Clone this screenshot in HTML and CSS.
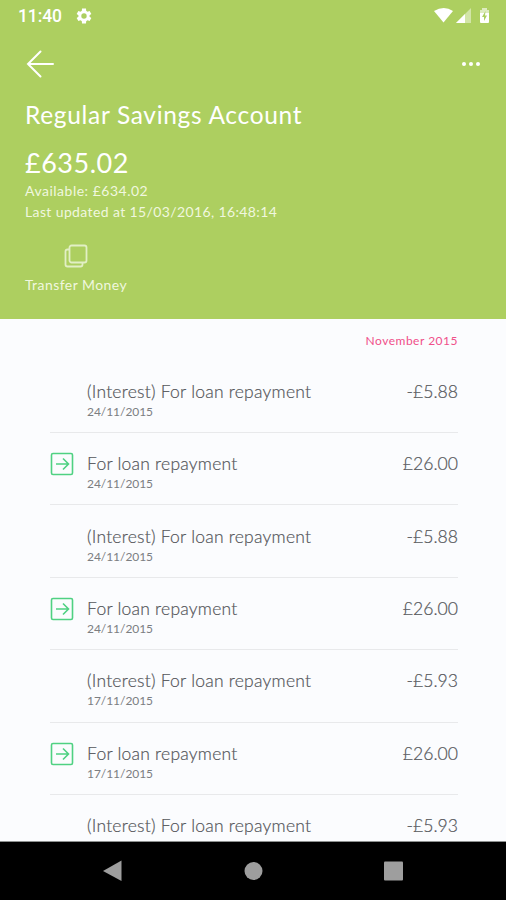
FILE: index.html
```html
<!DOCTYPE html>
<html lang="en">
<head>
<meta charset="utf-8">
<title>Regular Savings Account</title>
<link rel="stylesheet" href="styles.css">
</head>
<body>
<div class="screen">
  <header class="account">
    <div class="status">
      <span class="clock">11:40</span>
      <svg class="gear" viewBox="0 0 24 24"><path fill="#fff" fill-rule="evenodd" d="M19.4 13a7.500 7.500 0 0 0 0-2l2.400-1.800-2.300-4-2.800 1.200a8 8 0 0 0-1.700-1L14.600 2H9.400L9 5.400a8 8 0 0 0-1.700 1L4.500 5.200l-2.300 4L4.600 11a7.500 7.500 0 0 0 0 2l-2.400 1.800 2.300 4 2.800-1.200a8 8 0 0 0 1.700 1l.4 3.400h5.200l.4-3.400a8 8 0 0 0 1.700-1l2.800 1.200 2.300-4zM12 15.600a3.600 3.600 0 1 1 0-7.200 3.600 3.600 0 0 1 0 7.200z"/></svg>
      <svg class="signals" viewBox="0 0 58 18"><path fill="#fff" d="M0 4Q10-2 19 4L9.500 15.500z"/><path fill="#fff" opacity=".45" d="M22 16 37 1v15z"/><path fill="#fff" d="M22 16 31 7v9z"/><path fill="#fff" opacity=".6" d="M46 3h2V1h5v2h2v4h-9z"/><path fill="#fff" d="M46 6h9v9q0 1-1 1h-7q-1 0-1-1z"/><path fill="#adcf60" d="m51.500 4-3.500 6h2v4l3-5.500h-2z"/></svg>
    </div>
    <div class="toolbar">
      <svg class="back" viewBox="0 0 28 28"><path d="M14.500 1.500 2 14l12.500 12.500M2 14h25"/></svg>
      <svg class="more" viewBox="0 0 20 6"><circle cx="3" cy="3" r="2"/><circle cx="10" cy="3" r="2"/><circle cx="17" cy="3" r="2"/></svg>
    </div>
    <h1 class="name">Regular Savings Account</h1>
    <div class="balance">£635.02</div>
    <div class="meta available">Available: £634.02</div>
    <div class="meta updated">Last updated at 15/03/2016, 16:48:14</div>
    <div class="transfer">
      <svg class="copy" viewBox="0 0 24 24"><rect x="5.500" y="1.500" width="17" height="17" rx="2"/><path d="M5.500 5.500h-2q-2 0-2 2v13q0 2 2 2h13q2 0 2-2v-2"/></svg>
      <span class="meta transfer-label">Transfer Money</span>
    </div>
  </header>
  <main class="history">
    <div class="month"><span>November 2015</span></div>
    <div class="row"><div class="icon"></div><div class="text"><div class="title interest">(Interest) For loan repayment</div><div class="date">24/11/2015</div></div><div class="amount">-£5.88</div></div>
    <div class="row"><div class="icon"><svg viewBox="0 0 24 24"><rect x="1.500" y="1.500" width="21" height="21" rx="1.500"/><path d="M6 12h12M13 6.500l5.500 5.500-5.500 5.500"/></svg></div><div class="text"><div class="title">For loan repayment</div><div class="date">24/11/2015</div></div><div class="amount">£26.00</div></div>
    <div class="row"><div class="icon"></div><div class="text"><div class="title interest">(Interest) For loan repayment</div><div class="date">24/11/2015</div></div><div class="amount">-£5.88</div></div>
    <div class="row"><div class="icon"><svg viewBox="0 0 24 24"><rect x="1.500" y="1.500" width="21" height="21" rx="1.500"/><path d="M6 12h12M13 6.500l5.500 5.500-5.500 5.500"/></svg></div><div class="text"><div class="title">For loan repayment</div><div class="date">24/11/2015</div></div><div class="amount">£26.00</div></div>
    <div class="row"><div class="icon"></div><div class="text"><div class="title interest">(Interest) For loan repayment</div><div class="date">17/11/2015</div></div><div class="amount">-£5.93</div></div>
    <div class="row"><div class="icon"><svg viewBox="0 0 24 24"><rect x="1.500" y="1.500" width="21" height="21" rx="1.500"/><path d="M6 12h12M13 6.500l5.500 5.500-5.500 5.500"/></svg></div><div class="text"><div class="title">For loan repayment</div><div class="date">17/11/2015</div></div><div class="amount">£26.00</div></div>
    <div class="row"><div class="icon"></div><div class="text"><div class="title interest">(Interest) For loan repayment</div><div class="date">17/11/2015</div></div><div class="amount">-£5.93</div></div>
  </main>
  <nav class="navbar">
    <svg viewBox="0 0 24 24"><path d="M2 12 20.500 1.500v20.500z"/></svg>
    <svg viewBox="0 0 24 24"><circle cx="12.500" cy="12" r="9"/></svg>
    <svg viewBox="0 0 24 24"><rect x="3" y="2.500" width="19" height="19" rx="1"/></svg>
  </nav>
</div>
</body>
</html>
```
FILE: styles.css
```css
* { box-sizing: border-box; }
body { margin: 0; font-family: Lato, "Open Sans", sans-serif; font-weight: 400; }
.screen { width: 506px; height: 900px; display: flex; flex-direction: column; overflow: hidden; background: #fbfcfe; }
.account { flex: none; height: 319px; background: #adcf60; color: #fff; padding: 0 25px; }
.status { height: 32px; margin: 0 -11px 0 -7px; display: flex; align-items: center; }
.clock { font: 500 17.500px/32px Roboto, sans-serif; width: 57px; letter-spacing: -.1px; }
.gear { width: 18px; height: 18px; }
.signals { width: 58px; height: 18px; margin-left: auto; }
.toolbar { height: 63px; display: flex; align-items: center; justify-content: space-between; }
.back { width: 28px; height: 28px; margin-left: 1px; fill: none; stroke: #fff; stroke-width: 2; stroke-linecap: round; }
.more { width: 20px; height: 6px; fill: #fff; }
.name { margin: 4px 0 0; height: 32px; line-height: 32px; font-size: 24.500px; font-weight: 400; letter-spacing: .680px; white-space: nowrap; }
.balance { margin-top: 15px; height: 34px; line-height: 34px; font-size: 27px; letter-spacing: .5px; }
.meta { height: 21px; line-height: 21px; font-size: 14px; color: #f0f7df; letter-spacing: .5px; white-space: nowrap; }
.updated { letter-spacing: .380px; }
.transfer { width: 102px; margin-top: 22px; display: flex; flex-direction: column; align-items: center; }
.transfer-label { letter-spacing: .450px; }
.copy { width: 24px; height: 24px; margin-bottom: 6px; fill: none; stroke: #e2efc5; stroke-width: 1.800; }
.history { flex: 1; min-height: 0; overflow: hidden; padding: 0 48px 0 50px; color: #54565a; border-bottom: 1px solid #8e9190; }
.month { height: 41.600px; padding-top: 12px; text-align: right; font-size: 12px; line-height: 19px; color: #f04f8a; letter-spacing: .5px; }
.row { height: 72.400px; display: flex; align-items: flex-start; padding-top: 19.300px; border-bottom: 1.400px solid #e8e9eb; }
.icon { width: 37px; }
.icon svg { display: block; width: 24px; height: 24px; fill: none; stroke: #4fd182; stroke-width: 1.600; }
.text { flex: 1; }
.title { height: 24px; line-height: 24px; font-size: 17.500px; font-weight: 300; letter-spacing: .240px; white-space: nowrap; -webkit-text-stroke: .2px #54565a; }
.date { height: 16px; line-height: 16px; font-size: 12px; letter-spacing: -.05px; color: #7c7e82; }
.amount { line-height: 24px; font-size: 17.600px; font-weight: 300; -webkit-text-stroke: .2px #54565a; }
.navbar { flex: none; height: 58px; background: #000; display: flex; justify-content: space-between; align-items: center; padding: 0 101px; }
.navbar svg { width: 24px; height: 24px; fill: #9e9e9e; }
```
